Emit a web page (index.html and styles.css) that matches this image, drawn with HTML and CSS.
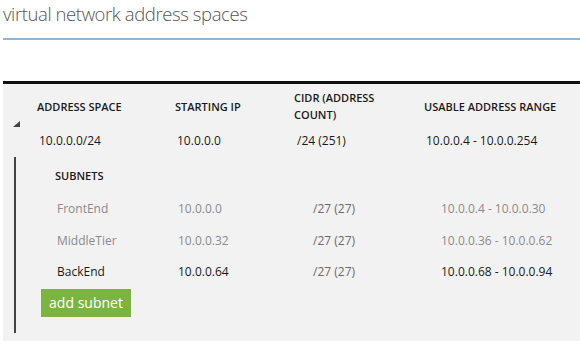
FILE: index.html
```html
<!DOCTYPE html>
<html>
<head>
<meta charset="utf-8">
<link rel="stylesheet" href="styles.css">
</head>
<body>
<div class="title">virtual network address spaces</div>
<div class="panel">
  <div class="space-grid">
    <div class="toggle"><svg width="7" height="6" viewBox="0 0 7 6"><polygon points="7,0 7,6 0,6" fill="#444"/></svg></div>
    <div class="hd c1">ADDRESS SPACE</div>
    <div class="hd c2">STARTING IP</div>
    <div class="hd c3">CIDR (ADDRESS<br>COUNT)</div>
    <div class="hd c4">USABLE ADDRESS RANGE</div>
    <div class="dt c1 d1">10.0.0.0/24</div>
    <div class="dt c2 d2">10.0.0.0</div>
    <div class="dt c3 d3">/24 (251)</div>
    <div class="dt c4 d4">10.0.0.4 - 10.0.0.254</div>
  </div>
  <div class="subnets">
    <div class="sub-title">SUBNETS</div>
    <div class="sub-row muted">
      <div>FrontEnd</div><div>10.0.0.0</div><div class="cidr">/27 (27)</div><div>10.0.0.4 - 10.0.0.30</div>
    </div>
    <div class="sub-row muted">
      <div>MiddleTier</div><div>10.0.0.32</div><div class="cidr">/27 (27)</div><div>10.0.0.36 - 10.0.0.62</div>
    </div>
    <div class="sub-row dark last">
      <div>BackEnd</div><div>10.0.0.64</div><div class="cidr">/27 (27)</div><div>10.0.0.68 - 10.0.0.94</div>
    </div>
    <button class="add">add subnet</button>
  </div>
</div>
</body>
</html>
```
FILE: styles.css
```css
* { box-sizing: border-box; }
body {
  margin: 0;
  background: #fff;
  font-family: "Open Sans", "Noto Sans", sans-serif;
  color: #222;
  width: 580px;
  overflow: hidden;
}
.title {
  margin-left: 3px;
  height: 40px;
  padding-top: 1px;
  font-size: 18.5px;
  font-weight: 300;
  color: #555;
  line-height: 26px;
  letter-spacing: -0.4px;
  border-bottom: 2px solid #8db6de;
}
.panel {
  margin: 41px 0 0 3px;
  border-top: 3px solid #111;
  background: #f2f2f2;
  height: 260px;
}
.space-grid {
  display: grid;
  grid-template-columns: 34px 138px 119px 130px 1fr;
  grid-template-rows: 34px 34px;
  padding-top: 5px;
  align-items: center;
}
.toggle {
  grid-column: 1;
  grid-row: 1 / span 2;
  padding-left: 10px;
  padding-top: 1px;
  display: flex;
  align-items: center;
  height: 100%;
}
.hd {
  font-size: 11px;
  font-weight: 600;
  line-height: 17px;
  color: #1a1a1a;
}
.dt {
  grid-row: 2;
  font-size: 12px;
  color: #1a1a1a;
}
.c1 { grid-column: 2; }
.c2 { grid-column: 3; }
.c3 { grid-column: 4; }
.c4 { grid-column: 5; }
.d1, .d2, .d3, .d4 { padding-left: 2px; }
.d3 { padding-left: 3px; }
.subnets {
  margin: 0 0 0 11px;
  border-left: 2px solid #444;
  padding: 3px 0 16px 0;
  width: 540px;
}
.sub-title {
  height: 32px;
  line-height: 32px;
  padding-left: 39px;
  font-size: 11px;
  font-weight: 600;
  color: #1a1a1a;
}
.sub-row {
  display: grid;
  grid-template-columns: 121px 135px 128px 1fr;
  height: 32px;
  align-items: center;
  padding-left: 41px;
  font-size: 12px;
}
.sub-row.last { height: 31px; }
.muted { color: #8a8a8a; }
.dark { color: #1a1a1a; }
.cidr { color: #6a6a6a; }
.add {
  display: block;
  margin: 2px 0 0 25px;
  height: 28px;
  width: 90px;
  border: 0;
  padding: 0;
  background: #7db441;
  color: #fff;
  font-family: "Open Sans", "Noto Sans", sans-serif;
  font-size: 14px;
  line-height: 28px;
}
```
